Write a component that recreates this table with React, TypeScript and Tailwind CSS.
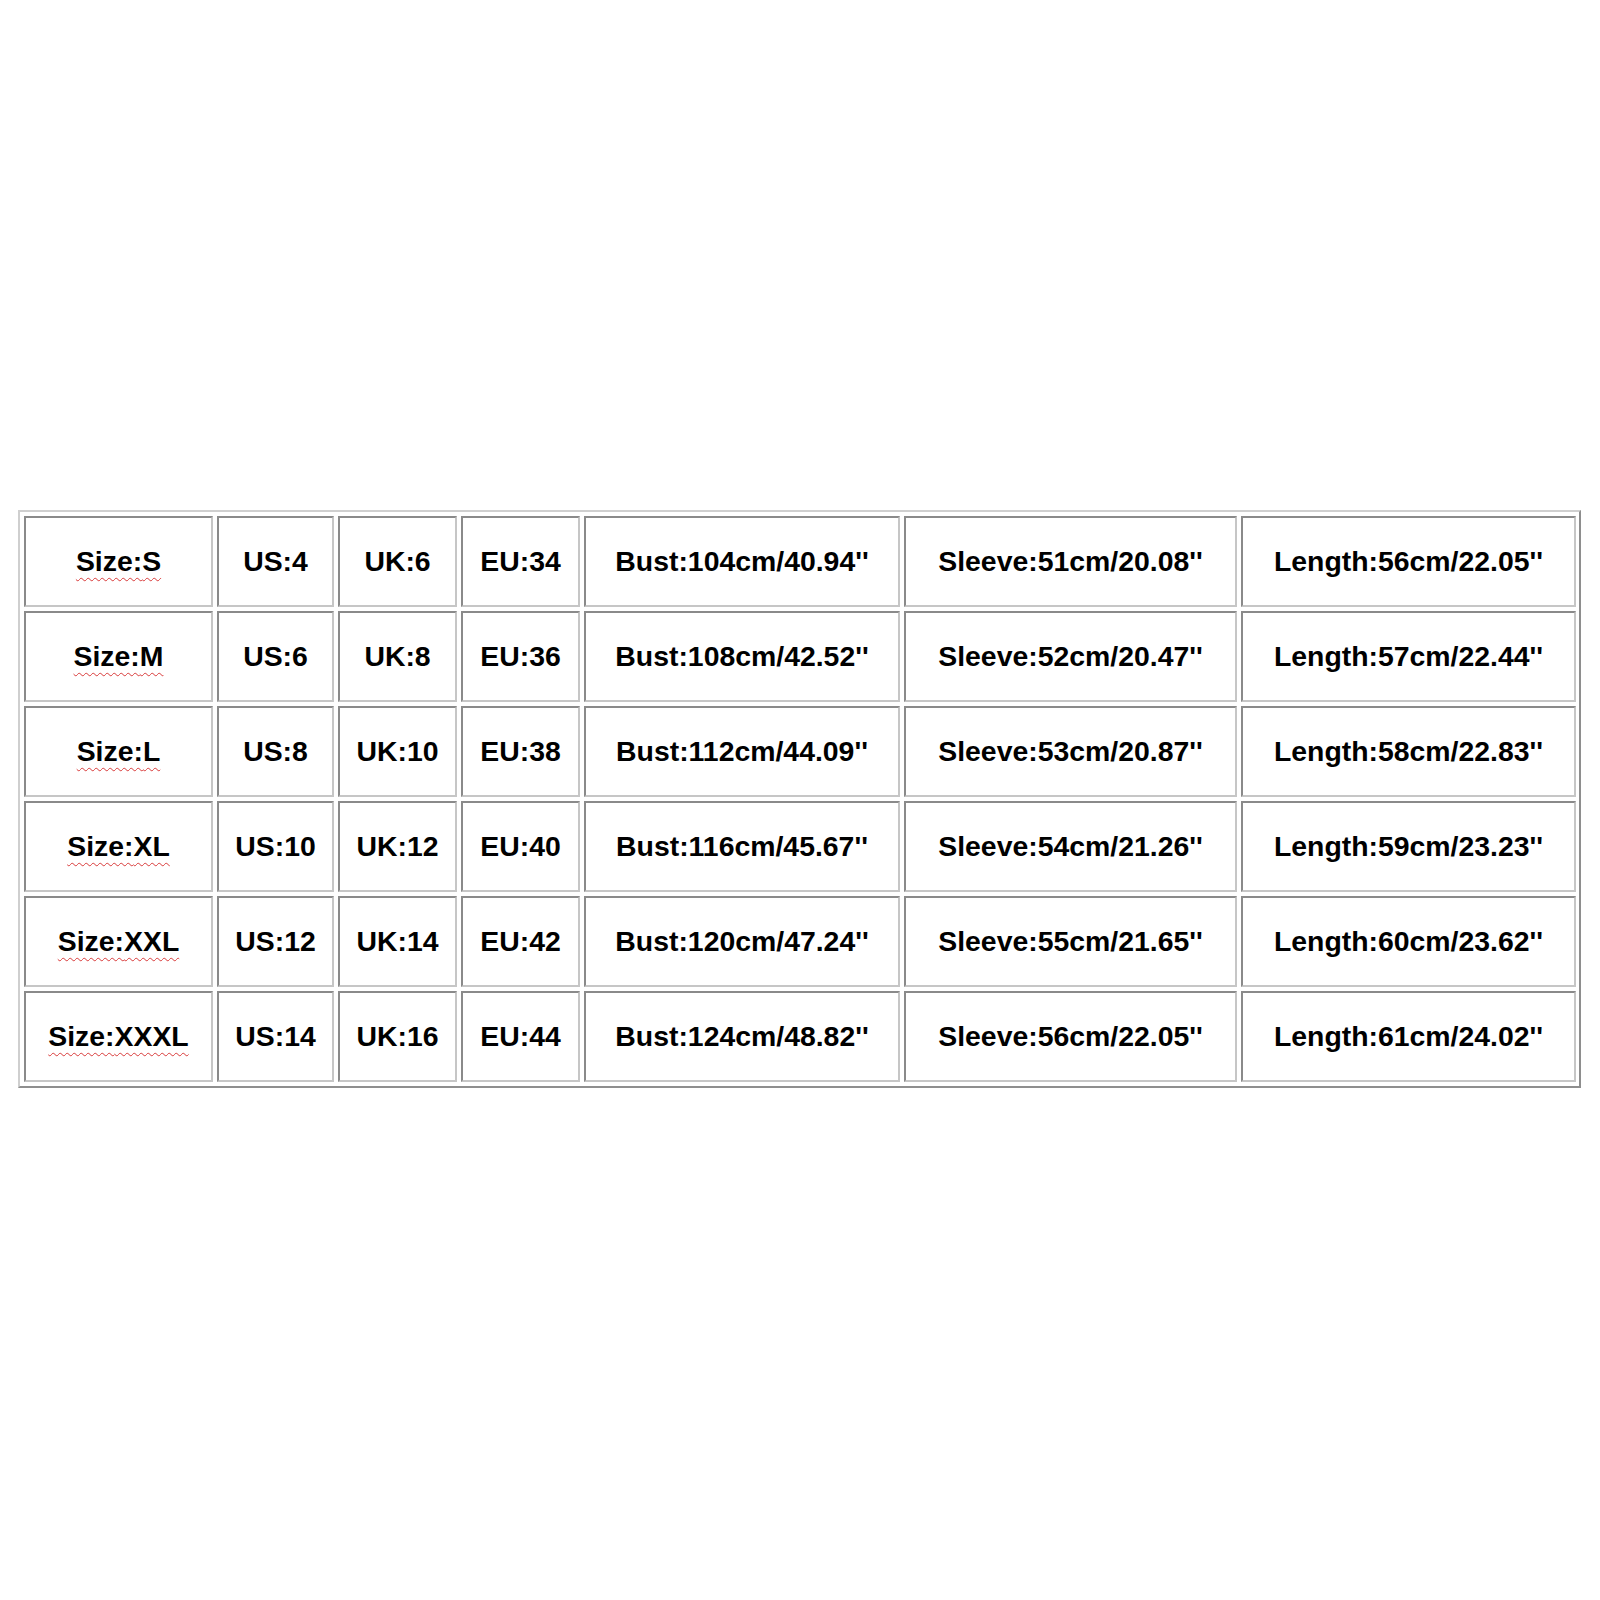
import React from "react";

const rows = [
  ["S", "US:4", "UK:6", "EU:34", "Bust:104cm/40.94''", "Sleeve:51cm/20.08''", "Length:56cm/22.05''"],
  ["M", "US:6", "UK:8", "EU:36", "Bust:108cm/42.52''", "Sleeve:52cm/20.47''", "Length:57cm/22.44''"],
  ["L", "US:8", "UK:10", "EU:38", "Bust:112cm/44.09''", "Sleeve:53cm/20.87''", "Length:58cm/22.83''"],
  ["XL", "US:10", "UK:12", "EU:40", "Bust:116cm/45.67''", "Sleeve:54cm/21.26''", "Length:59cm/23.23''"],
  ["XXL", "US:12", "UK:14", "EU:42", "Bust:120cm/47.24''", "Sleeve:55cm/21.65''", "Length:60cm/23.62''"],
  ["XXXL", "US:14", "UK:16", "EU:44", "Bust:124cm/48.82''", "Sleeve:56cm/22.05''", "Length:61cm/24.02''"],
];

const cell =
  "flex h-[91px] items-center justify-center border-2 border-t-[#8a8a8a] border-l-[#8a8a8a] border-b-[#c6c6c6] border-r-[#c6c6c6] bg-white";

export default function App() {
  return (
    <div className="min-h-[1600px] bg-white pl-[18px] pt-[510px] font-['Liberation_Sans',Arial,sans-serif] text-[28.4px] font-bold text-black">
      <div className="grid w-[1563px] grid-cols-[189px_117px_119px_119px_316px_333px_335px] gap-[4px] border-2 border-t-[#cfcfcf] border-l-[#cfcfcf] border-b-[#8e8e8e] border-r-[#8e8e8e] p-[4px]">
        {rows.map((r) => (
          <React.Fragment key={r[0]}>
            <div className={cell}>
              <span className="underline decoration-wavy decoration-[#d83a3a] decoration-1 underline-offset-[6px]">
                Size:{r[0]}
              </span>
            </div>
            {r.slice(1).map((t) => (
              <div key={t} className={cell}>
                {t}
              </div>
            ))}
          </React.Fragment>
        ))}
      </div>
    </div>
  );
}
